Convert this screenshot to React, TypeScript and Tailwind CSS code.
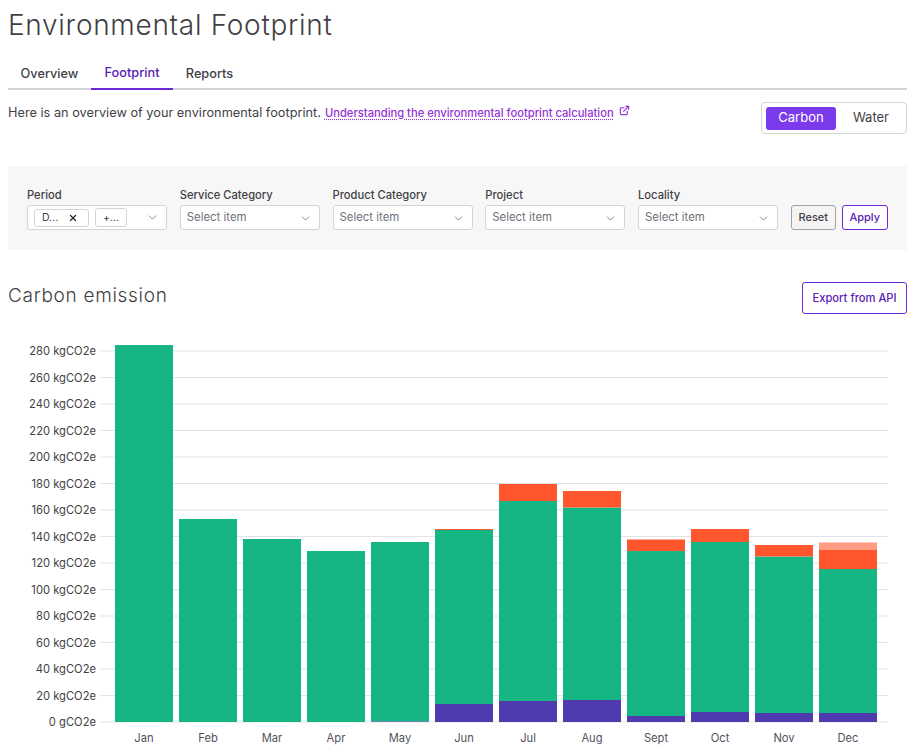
import React from 'react';
import { ChevronDown, ExternalLink, X } from 'lucide-react';

const FONT = "font-['Inter','Liberation_Sans',sans-serif]";

const yTicks = Array.from({ length: 15 }, (_, i) => i * 20);

// y positions are pixel tops of each stacked segment, measured on the chart
const months = [
  { name: 'Jan', green: 345 },
  { name: 'Feb', green: 519 },
  { name: 'Mar', green: 539 },
  { name: 'Apr', green: 551 },
  { name: 'May', green: 542, purple: 721.5 },
  { name: 'Jun', green: 530, purple: 704, orange: 529 },
  { name: 'Jul', green: 501, purple: 701, orange: 484 },
  { name: 'Aug', green: 507.5, purple: 700, orange: 491 },
  { name: 'Sept', green: 551, purple: 716, orange: 539.5 },
  { name: 'Oct', green: 542, purple: 712, orange: 529 },
  { name: 'Nov', green: 556.5, purple: 713, orange: 545 },
  { name: 'Dec', green: 569, purple: 713, orange: 550, light: 542.5 },
];

const CHART_TOP = 330;
const BASE = 722;

const SelectBox = ({ label }: { label: string }) => (
  <div className="w-[140px] shrink-0">
    <div className="mb-[2px] text-[11.2px] leading-[16px] font-medium text-[#3f3f46]">{label}</div>
    <div className="flex h-[25px] items-center justify-between rounded-[3px] border border-[#d4d4d8] bg-white pl-[6px] pr-[7px] pt-[1px] text-[11.4px] text-[#71717a]">
      <span>Select item</span>
      <ChevronDown size={13} strokeWidth={1.5} className="text-[#71717a]" />
    </div>
  </div>
);

const PeriodBox = () => (
  <div className="w-[140px] shrink-0">
    <div className="mb-[2px] text-[11.2px] leading-[16px] font-medium text-[#3f3f46]">Period</div>
    <div className="flex h-[25px] items-center rounded-[3px] border border-[#d4d4d8] bg-white pl-[6px] pr-[7px] text-[10.5px] text-[#3f3f46]">
      <span className="flex h-[18px] w-[55px] items-center justify-between rounded-[3px] border border-[#d4d4d8] pl-[7px] pr-[10px]">
        D...
        <X size={10} strokeWidth={3} className="text-[#27272a]" />
      </span>
      <span className="ml-[6px] flex h-[19px] w-[32px] items-center justify-center rounded-[3px] border border-[#d4d4d8]">
        +...
      </span>
      <ChevronDown size={13} strokeWidth={1.5} className="ml-auto text-[#71717a]" />
    </div>
  </div>
);

const Chart = () => (
  <svg width={915} height={426} viewBox={`0 ${CHART_TOP} 915 426`} className="block">
    {yTicks.map((tick) => {
      const y = BASE - (tick / 20) * 26.5;
      return (
        <g key={tick}>
          <line x1={100} x2={888} y1={y} y2={y} stroke="#e4e4e7" strokeWidth={1} />
          <text x={96} y={y + 4} textAnchor="end" fontSize={11.2} fill="#3f3f46" fontFamily="Inter, sans-serif">
            {tick === 0 ? '0 gCO2e' : `${tick} kgCO2e`}
          </text>
        </g>
      );
    })}
    {months.map((m, i) => {
      const x = 115 + i * 64;
      const purple = m.purple ?? BASE;
      return (
        <g key={m.name}>
          <rect x={x} y={m.green} width={58} height={purple - m.green} fill="#16b584" />
          {m.purple && <rect x={x} y={m.purple} width={58} height={BASE - m.purple} fill="#503ab0" />}
          {m.orange && <rect x={x} y={m.orange} width={58} height={m.green - m.orange} fill="#ff562d" />}
          {m.light && <rect x={x} y={m.light} width={58} height={(m.orange ?? 0) - m.light} fill="#ff9c85" />}
          <text x={x + 29} y={742} textAnchor="middle" fontSize={11.2} fill="#52525b" fontFamily="Inter, sans-serif">
            {m.name}
          </text>
        </g>
      );
    })}
  </svg>
);

const App: React.FC = () => {
  return (
    <div className={`h-[756px] w-[915px] overflow-hidden bg-white ${FONT}`}>
      <div className="px-[8px]">
        <h1 className="pt-[8px] text-[28px] leading-[34px] font-light tracking-[0.7px] text-[#3f3f46]">
          Environmental Footprint
        </h1>

        <div className="mt-[16px] flex h-[32px] border-b-2 border-[#d4d4d8] text-[12.75px] font-medium">
          <div className="flex h-[32px] w-[83px] items-center justify-center text-[#3f3f46]">Overview</div>
          <div className="flex h-[32px] w-[82px] items-center justify-center border-b-2 border-[#6d28d9] text-[#5b21b6]">Footprint</div>
          <div className="flex h-[32px] w-[73px] items-center justify-center text-[#3f3f46]">Reports</div>
        </div>

        <div className="mt-[12px] flex items-start justify-between">
          <p className="flex items-start pt-[1px] text-[12.75px] leading-[20px] text-[#3f3f46]">
            Here is an overview of your environmental footprint.
            <a className="ml-[4px] text-[11.2px] font-medium text-[#9333d6] underline decoration-dotted underline-offset-2">
              Understanding the environmental footprint calculation
            </a>
            <ExternalLink size={11} strokeWidth={2.5} className="ml-[5px] mt-[2px] text-[#9333d6]" />
          </p>
          <div className="flex h-[32px] w-[146px] items-center rounded-[4px] border border-[#d4d4d8] pl-[4px] text-[13px]">
            <div className="flex h-[23px] w-[70px] shrink-0 items-center justify-center rounded-[3px] bg-[#7c3aed] text-white">Carbon</div>
            <div className="flex w-[70px] shrink-0 justify-center text-[#3f3f46]">Water</div>
          </div>
        </div>

        <div className="mt-[32px] flex h-[84px] items-start gap-[12.75px] bg-[#f7f7f7] pl-[19px] pt-[21px]">
          <PeriodBox />
          <SelectBox label="Service Category" />
          <SelectBox label="Product Category" />
          <SelectBox label="Project" />
          <SelectBox label="Locality" />
          <div className="mt-[18px] flex gap-[6px] text-[11px] font-medium">
            <button className="h-[25px] w-[45px] rounded-[3px] border border-[#a1a1aa] bg-[#f4f4f5] text-[#3f3f46]">Reset</button>
            <button className="h-[25px] w-[46px] rounded-[3px] border border-[#6d28d9] bg-white text-[#5b21b6]">Apply</button>
          </div>
        </div>

        <div className="mt-[32px] flex items-start justify-between">
          <h2 className="mt-[1px] text-[19px] leading-[26px] font-light tracking-[0.7px] text-[#3f3f46]">Carbon emission</h2>
          <button className="h-[32px] w-[105px] rounded-[3px] border border-[#6d28d9] bg-white text-[11.2px] font-medium text-[#5b21b6]">
            Export from API
          </button>
        </div>
      </div>

      <div className="mt-[16px]">
        <Chart />
      </div>
    </div>
  );
};

export default App;
